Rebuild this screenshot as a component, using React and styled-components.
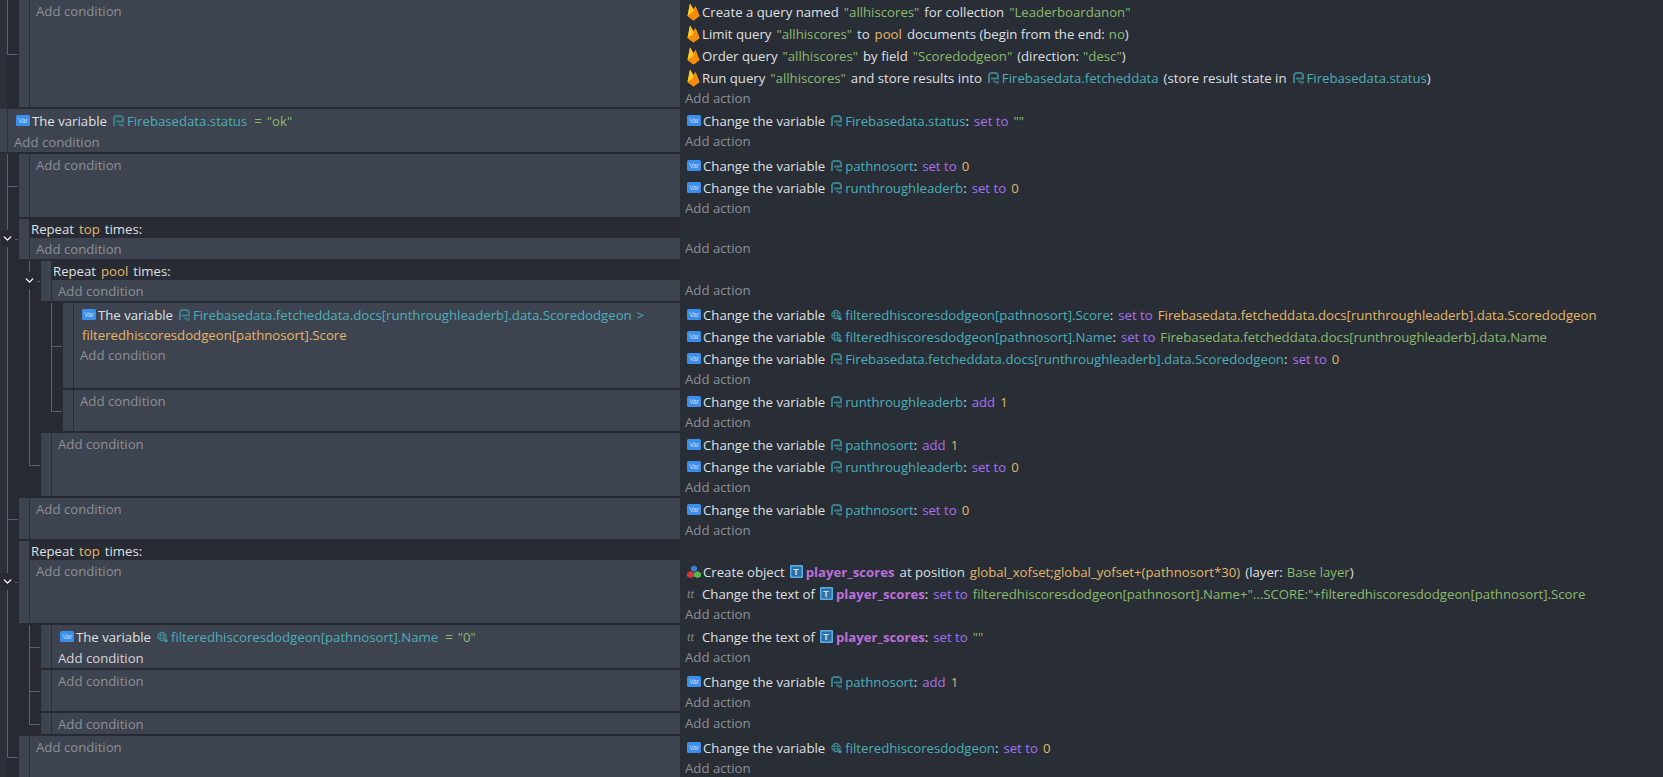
import React from 'react';
import styled, { createGlobalStyle, css } from 'styled-components';
import { ChevronDown } from 'lucide-react';

const GlobalStyle = createGlobalStyle`
  html, body {
    margin: 0;
    height: 100%;
    background: #292d36;
  }
  body {
    font-family: 'Open Sans', 'Noto Sans', sans-serif;
    font-size: 13.2px;
    color: #dfe0e2;
  }
`;

function FlameIcon() {
  return (
    <Ico width='13' height='18' viewBox='0 0 13 18'>
      <path d='M0.5 13 L3 0.5 L6.5 6 L8.5 3 L12.5 13 L6.5 17.5 Z' fill='#ffa000' />
      <path d='M0.5 13 L3 0.5 L7 8 Z' fill='#ffca28' />
      <path d='M8.5 3 L12.5 13 L6.5 17.5 L0.5 13 L6 10 Z' fill='#f58a0b' />
    </Ico>
  );
}

function VarIcon() {
  return (
    <Ico width='14' height='11' viewBox='0 0 14 11'>
      <rect width='14' height='11' rx='1.5' fill='#3b8eea' />
      <text x='7' y='8' fontSize='6.5' textAnchor='middle' fill='#c4dffb' fontFamily='Liberation Sans'>Var</text>
    </Ico>
  );
}

function ScopeIcon() {
  return (
    <ScopeSvg width='11' height='12' viewBox='0 0 11 12'>
      <path d='M1 11V3.5A2.5 2.5 0 0 1 3.5 1h4A2.5 2.5 0 0 1 10 3.5V6.5H3' fill='none' stroke='#3d7f88' strokeWidth='2' />
      <path d='M5 9.5h2.5l1.2 2M10 9v2.5' fill='none' stroke='#3d7f88' strokeWidth='1.5' />
    </ScopeSvg>
  );
}

function GlobeIcon() {
  return (
    <ScopeSvg width='11' height='12' viewBox='0 0 12 12'>
      <circle cx='5.5' cy='5.5' r='4.6' fill='none' stroke='#3f9aa2' strokeWidth='1' />
      <ellipse cx='5.5' cy='5.5' rx='2' ry='4.6' fill='none' stroke='#3f9aa2' strokeWidth='.9' />
      <path d='M1 4h9M1 7h9' stroke='#3f9aa2' strokeWidth='.9' />
      <path d='M8 8.5h3.5v3H8z' fill='#3f9aa2' />
    </ScopeSvg>
  );
}

function CubesIcon() {
  return (
    <Ico width='14' height='13' viewBox='0 0 14 13'>
      <path d='M7 0.5l3 1.6v3.2L7 7 4 5.3V2.1z' fill='#3f7fd0' />
      <path d='M3.5 6L7 8v3.5L3.5 13 0 11.5V8z' fill='#d23a3a' />
      <path d='M10.5 6L14 8v3.5L10.5 13 7 11.5V8z' fill='#55b84a' />
    </Ico>
  );
}

function ObjectIcon() {
  return (
    <ObjSvg width='13' height='13' viewBox='0 0 13 13'>
      <rect width='13' height='13' rx='1' fill='#5aaee2' />
      <rect x='1.5' y='1.5' width='10' height='10' fill='#2b6fa8' />
      <text x='6' y='10' fontSize='9' fontWeight='700' textAnchor='middle' fill='#bfe3fa' fontFamily='Liberation Sans'>T</text>
    </ObjSvg>
  );
}

const V = () => <VarIcon />;
const F = () => <FlameIcon />;

const scope = (name) => (
  <>
    <ScopeIcon />
    <Name>{name}</Name>
  </>
);
const globe = (name) => (
  <>
    <GlobeIcon />
    <Name>{name}</Name>
  </>
);

// one "Change the variable x: set to y" action
function ChangeVar({ icon, name, op = 'set to', value, kind }) {
  const Value = kind === 'str' ? Str : Num;
  return (
    <ActionLine>
      <V />
      <Lead>Change the variable</Lead>
      {icon === 'globe' ? globe(name) : scope(name)}
      <Colon>:</Colon>
      <Op>{op}</Op>
      <Value>{value}</Value>
    </ActionLine>
  );
}

function Event({ cells = [], head, cond, actions, hot }) {
  return (
    <Row>
      <Left>
        <Gutter>
          {cells.map((kind, i) => (
            <Cell key={i} $kind={kind} $first={i === 0}>
              {kind === 'chevron' ? (
                <Chevron>
                  <ChevronDown size={13} strokeWidth={2.5} />
                </Chevron>
              ) : null}
            </Cell>
          ))}
        </Gutter>
        <Body>
          <Bar />
          <CondCol>
            {head ? <RepeatHead>{head}</RepeatHead> : null}
            <Cond>
              {cond}
              <AddCondition $hot={hot}>Add condition</AddCondition>
            </Cond>
          </CondCol>
        </Body>
      </Left>
      <Right>
        {head ? <RightHead /> : null}
        {actions}
        <AddAction>Add action</AddAction>
      </Right>
    </Row>
  );
}

export default function App() {
  return (
    <Sheet>
      <GlobalStyle />
      <Event
        cells={['elbow']}
        actions={
          <>
            <ActionLine>
              <F />
              <Lead>Create a query named</Lead>
              <Str>"allhiscores"</Str>
              <Txt>for collection</Txt>
              <Str>"Leaderboardanon"</Str>
            </ActionLine>
            <ActionLine>
              <F />
              <Lead>Limit query</Lead>
              <Str>"allhiscores"</Str>
              <Txt>to</Txt>
              <Num>pool</Num>
              <Txt>documents (begin from the end:</Txt>
              <Str $near>no</Str>
              <Lead>)</Lead>
            </ActionLine>
            <ActionLine>
              <F />
              <Lead>Order query</Lead>
              <Str>"allhiscores"</Str>
              <Txt>by field</Txt>
              <Str>"Scoredodgeon"</Str>
              <Txt>(direction:</Txt>
              <Str $near>"desc"</Str>
              <Lead>)</Lead>
            </ActionLine>
            <ActionLine>
              <F />
              <Lead>Run query</Lead>
              <Str>"allhiscores"</Str>
              <Txt>and store results into</Txt>
              {scope('Firebasedata.fetcheddata')}
              <Txt>(store result state in</Txt>
              {scope('Firebasedata.status')}
              <Lead>)</Lead>
            </ActionLine>
          </>
        }
      />
      <Event
        cond={
          <CondLine>
            <V />
            <Lead>The variable</Lead>
            {scope('Firebasedata.status')}
            <Str $wide>=</Str>
            <Str>"ok"</Str>
          </CondLine>
        }
        actions={<ChangeVar name='Firebasedata.status' value='""' kind='str' />}
      />
      <Event
        cells={['tee']}
        actions={
          <>
            <ChangeVar name='pathnosort' value='0' />
            <ChangeVar name='runthroughleaderb' value='0' />
          </>
        }
      />
      <Event
        cells={['chevron']}
        head={
          <>
            <Lead>Repeat</Lead>
            <Num>top</Num>
            <Txt>times:</Txt>
          </>
        }
      />
      <Event
        cells={['through', 'chevron']}
        head={
          <>
            <Lead>Repeat</Lead>
            <Num>pool</Num>
            <Txt>times:</Txt>
          </>
        }
      />
      <Event
        cells={['through', 'through', 'tee']}
        cond={
          <>
            <CondLine>
              <V />
              <Lead>The variable</Lead>
              {scope('Firebasedata.fetcheddata.docs[runthroughleaderb].data.Scoredodgeon')}
              <Name $gap>&gt;</Name>
            </CondLine>
            <CondLine $wrapped>
              <Num $near>filteredhiscoresdodgeon[pathnosort].Score</Num>
            </CondLine>
          </>
        }
        actions={
          <>
            <ActionLine>
              <V />
              <Lead>Change the variable</Lead>
              {globe('filteredhiscoresdodgeon[pathnosort].Score')}
              <Colon>:</Colon>
              <Op>set to</Op>
              <Num>Firebasedata.fetcheddata.docs[runthroughleaderb].data.Scoredodgeon</Num>
            </ActionLine>
            <ActionLine>
              <V />
              <Lead>Change the variable</Lead>
              {globe('filteredhiscoresdodgeon[pathnosort].Name')}
              <Colon>:</Colon>
              <Op>set to</Op>
              <Str>Firebasedata.fetcheddata.docs[runthroughleaderb].data.Name</Str>
            </ActionLine>
            <ChangeVar name='Firebasedata.fetcheddata.docs[runthroughleaderb].data.Scoredodgeon' value='0' />
          </>
        }
      />
      <Event
        cells={['through', 'through', 'elbow']}
        actions={<ChangeVar name='runthroughleaderb' op='add' value='1' />}
      />
      <Event
        cells={['through', 'elbow']}
        actions={
          <>
            <ChangeVar name='pathnosort' op='add' value='1' />
            <ChangeVar name='runthroughleaderb' value='0' />
          </>
        }
      />
      <Event cells={['tee']} actions={<ChangeVar name='pathnosort' value='0' />} />
      <Event
        cells={['chevron']}
        head={
          <>
            <Lead>Repeat</Lead>
            <Num>top</Num>
            <Txt>times:</Txt>
          </>
        }
        actions={
          <>
            <ActionLine>
              <CubesIcon />
              <Lead>Create object</Lead>
              <ObjectIcon />
              <Obj>player_scores</Obj>
              <Txt>at position</Txt>
              <Num>global_xofset;global_yofset+(pathnosort*30)</Num>
              <Txt>(layer:</Txt>
              <Str $near>Base layer</Str>
              <Lead>)</Lead>
            </ActionLine>
            <ActionLine>
              <TextGlyph>tt</TextGlyph>
              <Lead>Change the text of</Lead>
              <ObjectIcon />
              <Obj>player_scores</Obj>
              <Colon>:</Colon>
              <Op>set to</Op>
              <Str>filteredhiscoresdodgeon[pathnosort].Name+"...SCORE:"+filteredhiscoresdodgeon[pathnosort].Score</Str>
            </ActionLine>
          </>
        }
      />
      <Event
        cells={['through', 'tee']}
        hot
        cond={
          <CondLine>
            <V />
            <Lead>The variable</Lead>
            {globe('filteredhiscoresdodgeon[pathnosort].Name')}
            <Str $wide>=</Str>
            <Str>"0"</Str>
          </CondLine>
        }
        actions={
          <ActionLine>
            <TextGlyph>tt</TextGlyph>
            <Lead>Change the text of</Lead>
            <ObjectIcon />
            <Obj>player_scores</Obj>
            <Colon>:</Colon>
            <Op>set to</Op>
            <Str>""</Str>
          </ActionLine>
        }
      />
      <Event cells={['through', 'tee']} actions={<ChangeVar name='pathnosort' op='add' value='1' />} />
      <Event cells={['through', 'elbow']} />
      <Event
        cells={['elbow']}
        actions={<ChangeVar icon='globe' name='filteredhiscoresdodgeon' value='0' />}
      />
    </Sheet>
  );
}

const GUTTER = '#272a32';
const PANEL = '#3e4350';
const LINE = '#5b606c';

const Sheet = styled.div`
  width: 1663px;
  height: 777px;
  overflow: hidden;
  background: #292d36;
`;

const Row = styled.div`
  display: flex;
  width: 100%;
`;

const Left = styled.div`
  display: flex;
  width: 683px;
  margin-left: -3px;
  flex: none;
  background: ${GUTTER};
`;

const Gutter = styled.div`
  display: flex;
  flex: none;
`;

const Cell = styled.div`
  position: relative;
  width: 22px;
  flex: none;
  background: ${(p) =>
    p.$first
      ? `linear-gradient(90deg, #2d303a 10px, ${GUTTER} 10px)`
      : GUTTER};

  &::before {
    content: '';
    position: absolute;
    left: 10px;
    top: 0;
    width: 1px;
    height: ${(p) => (p.$kind === 'elbow' ? 'calc(50% - 1px)' : '100%')};
    background: ${LINE};
  }

  &::after {
    content: '';
    display: ${(p) => (p.$kind === 'through' ? 'none' : 'block')};
    position: absolute;
    top: calc(50% - 1px);
    left: ${(p) => (p.$kind === 'chevron' ? '18px' : '10px')};
    right: 1px;
    height: 1px;
    background: ${LINE};
  }
`;

const Chevron = styled.div`
  position: absolute;
  left: 4px;
  top: calc(50% - 10px);
  width: 13px;
  height: 17px;
  display: flex;
  align-items: center;
  justify-content: center;
  color: #fff;
  background: ${GUTTER};
  z-index: 1;
`;

const Body = styled.div`
  display: flex;
  flex: 1;
  min-width: 0;
  margin-bottom: 2px;
  background: ${PANEL};
`;

const Bar = styled.div`
  width: 10px;
  flex: none;
  border-right: 1px solid #2b2e37;
`;

const CondCol = styled.div`
  display: flex;
  flex-direction: column;
  flex: 1;
  min-width: 0;
`;

const RepeatHead = styled.div`
  display: flex;
  align-items: center;
  height: 19px;
  padding-left: 1px;
  background: #282b34;
  white-space: pre;
`;

const Cond = styled.div`
  flex: 1;
  padding: 0 6px;
`;

const AddCondition = styled.div`
  height: 21px;
  line-height: 23px;
  color: ${(p) => (p.$hot ? '#d4d5d8' : '#8d9097')};
`;

const AddAction = styled.div`
  height: 19px;
  line-height: 21px;
  color: #8d9097;
`;

const Right = styled.div`
  flex: 1;
  padding: 0 5px 2px;
`;

const RightHead = styled.div`
  height: 19px;
`;

const lineCss = css`
  display: flex;
  align-items: center;
  box-sizing: border-box;
  height: 22px;
  padding: 1px 0 0 2px;
  white-space: pre;
`;

const ActionLine = styled.div`
  ${lineCss}
`;

const CondLine = styled.div`
  ${lineCss}
  height: ${(p) => (p.$wrapped ? '19px' : '22px')};
`;

const Ico = styled.svg`
  flex: none;
  margin-right: 2px;
`;

const ScopeSvg = styled.svg`
  flex: none;
  margin: 0 3px 0 6px;
`;

const ObjSvg = styled.svg`
  flex: none;
  margin: 0 3px 0 5px;
`;

const TextGlyph = styled.span`
  width: 13px;
  margin-right: 2px;
  font-family: 'Liberation Serif', serif;
  font-style: italic;
  font-size: 13px;
  color: #85888f;
`;

const Lead = styled.span`
  color: #dfe0e2;
`;

const Txt = styled.span`
  margin-left: 5px;
  color: #dfe0e2;
`;

const Colon = styled.span`
  color: #dfe0e2;
`;

const Name = styled.span`
  margin-left: ${(p) => (p.$gap ? '5px' : '0')};
  color: #4cafb8;
`;

const Str = styled.span`
  margin-left: ${(p) => (p.$wide ? '7px' : p.$near ? '4px' : '5px')};
  color: #8bbb6c;
`;

const Num = styled.span`
  margin-left: ${(p) => (p.$near ? '0' : '5px')};
  color: #e3b768;
`;

const Op = styled.span`
  margin-left: 5px;
  color: #a970f0;
`;

const Obj = styled.span`
  font-weight: 700;
  color: #bd6fd8;
`;
